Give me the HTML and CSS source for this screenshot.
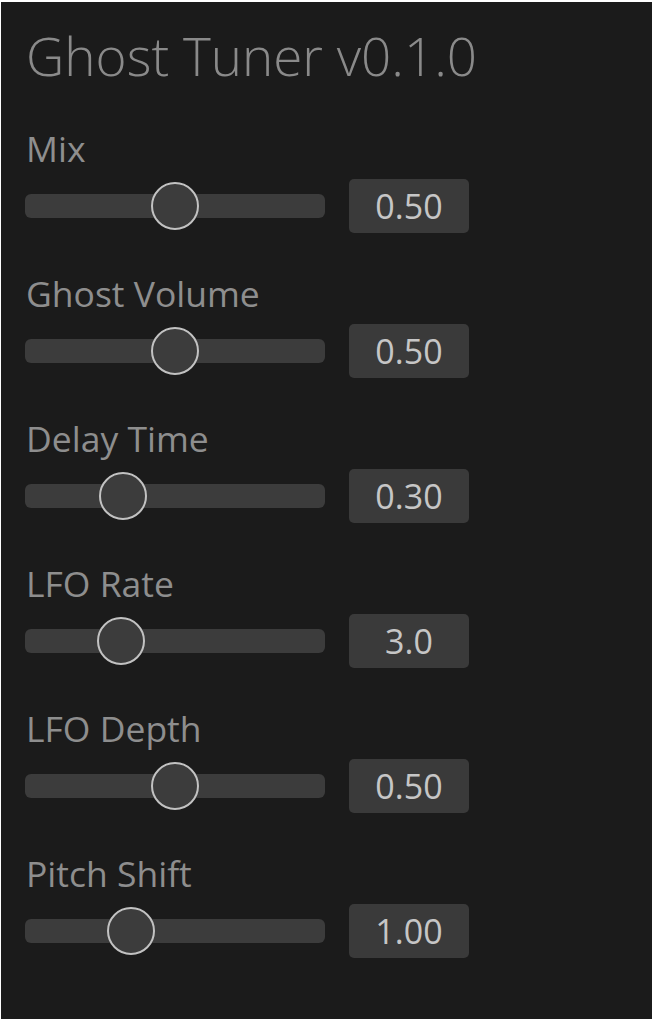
FILE: index.html
```html
<!DOCTYPE html>
<html>
<head>
<meta charset="utf-8">
<link rel="stylesheet" href="styles.css">
</head>
<body>
<div class="panel">
  <h1 class="title">Ghost Tuner v0.1.0</h1>
  <div class="params">
    <div class="param">
      <div class="label">Mix</div>
      <div class="control">
        <div class="track"><div class="thumb" style="--p:0.5"></div></div>
        <div class="value">0.50</div>
      </div>
    </div>
    <div class="param">
      <div class="label">Ghost Volume</div>
      <div class="control">
        <div class="track"><div class="thumb" style="--p:0.5"></div></div>
        <div class="value">0.50</div>
      </div>
    </div>
    <div class="param">
      <div class="label">Delay Time</div>
      <div class="control">
        <div class="track"><div class="thumb" style="--p:0.294"></div></div>
        <div class="value">0.30</div>
      </div>
    </div>
    <div class="param">
      <div class="label">LFO Rate</div>
      <div class="control">
        <div class="track"><div class="thumb" style="--p:0.286"></div></div>
        <div class="value">3.0</div>
      </div>
    </div>
    <div class="param">
      <div class="label">LFO Depth</div>
      <div class="control">
        <div class="track"><div class="thumb" style="--p:0.5"></div></div>
        <div class="value">0.50</div>
      </div>
    </div>
    <div class="param">
      <div class="label">Pitch Shift</div>
      <div class="control">
        <div class="track"><div class="thumb" style="--p:0.325"></div></div>
        <div class="value">1.00</div>
      </div>
    </div>
  </div>
</div>
</body>
</html>
```
FILE: styles.css
```css
html, body {
  margin: 0;
  padding: 0;
  background: #ffffff;
  height: 100%;
}
body {
  padding: 2px 0 0 1px;
  box-sizing: border-box;
  overflow: hidden;
}
.panel {
  background: #1b1b1b;
  height: 100%;
  box-sizing: border-box;
  padding: 24px 24px;
  font-family: "Open Sans", "DejaVu Sans", sans-serif;
}
.title {
  margin: 0 0 42px 1px;
  font-size: 53px;
  font-weight: 300;
  line-height: 60px;
  color: #8a8a8a;
}
.params {
  display: flex;
  flex-direction: column;
  gap: 40px;
}
.param {
  display: flex;
  flex-direction: column;
  gap: 11px;
}
.label {
  font-size: 35.5px;
  line-height: 40px;
  color: #8e8e8e;
  margin-left: 1px;
}
.control {
  display: flex;
  align-items: center;
  gap: 24px;
  height: 54px;
}
.track {
  position: relative;
  width: 300px;
  height: 24px;
  border-radius: 6px;
  background: #3c3c3c;
}
.thumb {
  position: absolute;
  top: 50%;
  left: calc(var(--p) * (100% - 48px));
  width: 48px;
  height: 48px;
  margin-top: -24px;
  box-sizing: border-box;
  border-radius: 50%;
  border: 2.5px solid #c2c2c2;
  background: #3c3c3c;
}
.value {
  width: 120px;
  height: 54px;
  border-radius: 5px;
  background: #3a3a3a;
  color: #c6c6c6;
  font-size: 34px;
  line-height: 54px;
  text-align: center;
}
```
